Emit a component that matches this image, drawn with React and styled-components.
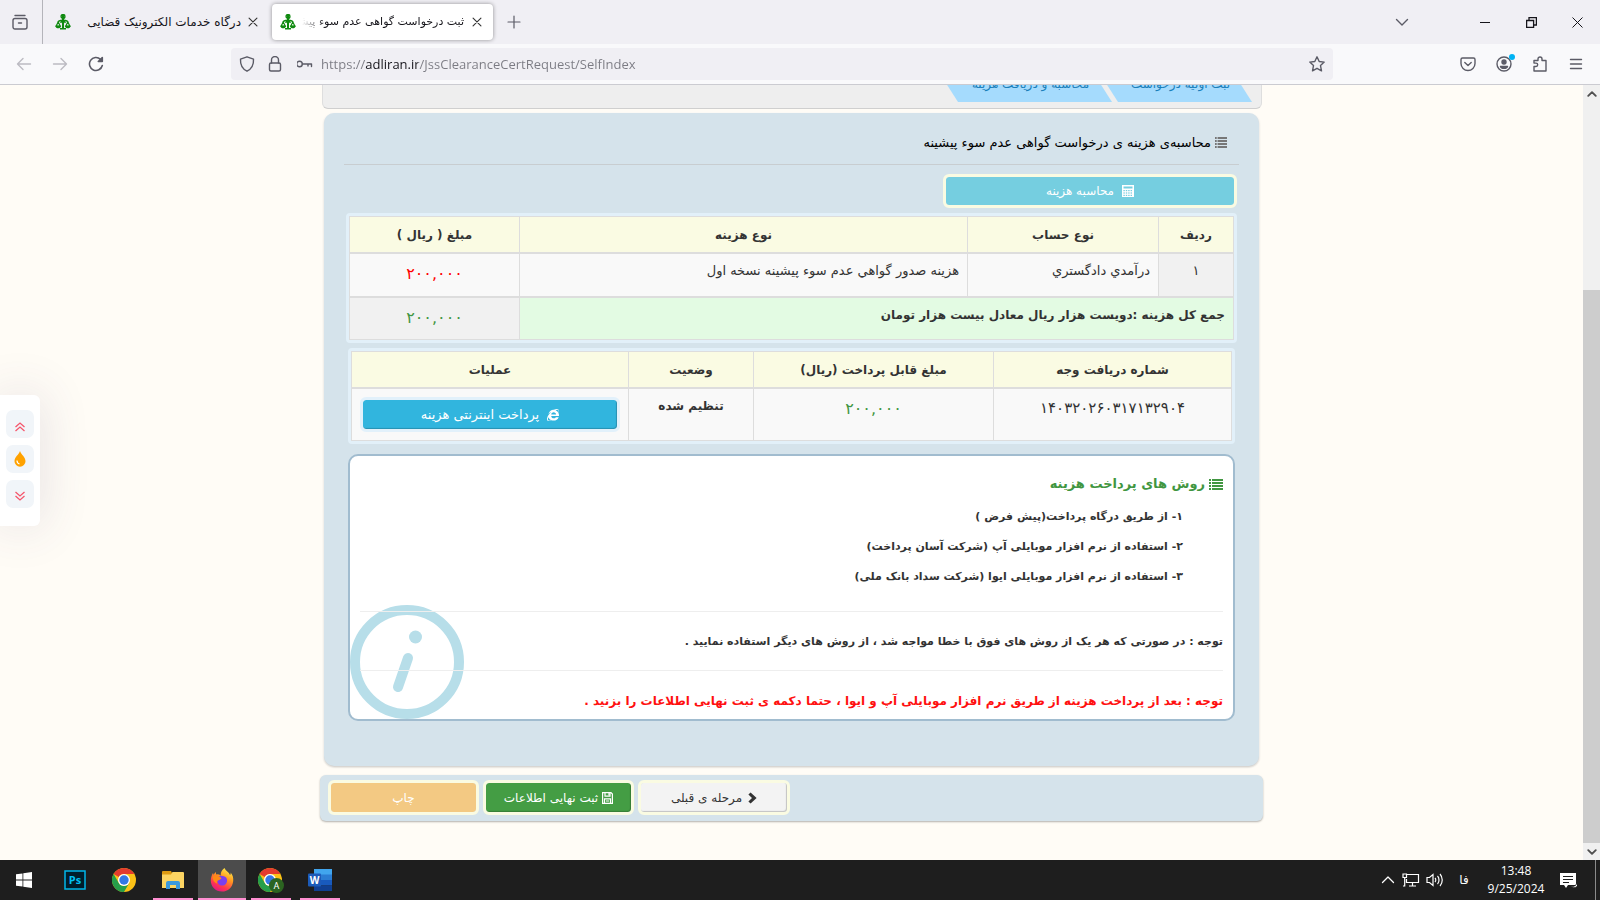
import React from 'react';
import styled, { createGlobalStyle } from 'styled-components';
import { FaInternetExplorer } from 'react-icons/fa';

const GlobalStyle = createGlobalStyle`
  * {
    box-sizing: border-box;
  }

  body {
    margin: 0;
    color: #333;
    font-family: 'DejaVu Sans', sans-serif;
    font-size: 12px;
  }

  button,
  input {
    font: inherit;
  }
`;

const Screen = styled.div`
  display: flex;
  flex-direction: column;
  height: 100vh;
  overflow: hidden;
`;

/* ---------- browser chrome ---------- */

const TabStrip = styled.div`
  display: flex;
  align-items: center;
  flex: none;
  height: 44px;
  background: #f0eff4;
`;

const IconButton = styled.button`
  display: flex;
  align-items: center;
  justify-content: center;
  flex: none;
  width: ${p => p.$width || 36}px;
  height: 32px;
  padding: 0;
  border: 0;
  background: none;
  color: ${p => p.$color || '#5b5b66'};
`;

const StripDivider = styled.div`
  width: 1px;
  height: 44px;
  margin-left: 2px;
  background: #b4b4ba;
`;

const Tab = styled.div`
  display: flex;
  align-items: center;
  width: 221px;
  height: 36px;
  margin-left: 4px;
  padding: 0 3px 0 8px;
  border-radius: 4px;
  background: ${p => (p.$active ? '#fff' : 'transparent')};
  box-shadow: ${p => (p.$active ? '0 0 4px rgba(0, 0, 0, 0.4)' : 'none')};
`;

const TabTitle = styled.span`
  flex: 1;
  min-width: 0;
  margin-left: 6px;
  overflow: hidden;
  color: #15141a;
  font-size: ${p => (p.$fade ? 11 : 12)}px;
  line-height: 24px;
  direction: rtl;
  white-space: nowrap;
  ${p => p.$fade && 'mask-image: linear-gradient(to right, transparent, #000 24px);'}
`;

const Spacer = styled.div`
  flex: 1;
  max-width: ${p => (p.$max ? `${p.$max}px` : 'none')};
`;

const NavBar = styled.div`
  display: flex;
  align-items: center;
  flex: none;
  height: 41px;
  padding: 0 6px;
  border-bottom: 1px solid #cbcbd1;
  background: #f9f9fb;
`;

const UrlBox = styled.div`
  display: flex;
  align-items: center;
  flex: 1;
  height: 32px;
  margin: 0 117px;
  padding-left: 2px;
  border-radius: 4px;
  background: #f0eff4;
`;

// the host name is darker than the rest of the address
const UrlInput = styled.input`
  flex: 1;
  min-width: 0;
  height: 24px;
  padding: 0;
  border: 0;
  outline: 0;
  font-family: 'Open Sans', sans-serif;
  font-size: 13px;
  background: linear-gradient(to right, #7b7b83 44px, #15141a 44px, #15141a 97px, #7b7b83 97px);
  background-clip: text;
  -webkit-text-fill-color: transparent;
`;

const BadgedIcon = styled.span`
  position: relative;
  display: flex;
`;

const Badge = styled.span`
  position: absolute;
  top: -2px;
  right: -3px;
  width: 6px;
  height: 6px;
  border-radius: 50%;
  background: #00b3f4;
`;

/* ---------- page ---------- */

const Viewport = styled.div`
  position: relative;
  display: flex;
  flex: 1;
  min-height: 0;
  background: #fffcf6;
`;

const Page = styled.main`
  flex: 1;
  overflow: hidden;
  direction: rtl;
`;

const Container = styled.div`
  max-width: 943px;
  margin: 0 auto;
`;

const Steps = styled.div`
  display: flex;
  align-items: flex-end;
  height: 24px;
  margin: 0 1px 0 2px;
  padding: 0 9px 6px;
  border: 1px solid #dedede;
  border-top: 0;
  border-bottom-color: #cfcfcf;
  border-radius: 0 0 6px 6px;
  background: #eee;
  overflow: hidden;
`;

const Step = styled.div`
  flex: none;
  width: ${p => p.$width}px;
  height: 36px;
  margin-left: -17px;
  padding-left: 14px;
  background: #a5dbfd;
  color: #1a7fba;
  font-size: 12px;
  line-height: 36px;
  text-align: center;
  clip-path: polygon(0 0, calc(100% - 23px) 0, 100% 100%, 23px 100%);
`;

const Panel = styled.section`
  margin: 4px 4px 0;
  padding: 0 20px 45px;
  border-radius: 10px;
  background: #d5e3eb;
  box-shadow: 0 0 0 1px rgba(255, 255, 255, 0.3), 0 1px 2px rgba(0, 0, 0, 0.3);
`;

const PanelTitle = styled.h2`
  display: flex;
  align-items: center;
  gap: 4px;
  height: 52px;
  margin: 0 0 9px;
  padding: 8px 12px 0 0;
  border-bottom: 1px solid #c8cdd0;
  color: #000;
  font-size: 13px;
  font-weight: normal;
`;

const Button = styled.button`
  display: flex;
  align-items: center;
  justify-content: center;
  gap: ${p => p.$gap || 4}px;
  width: ${p => p.$width};
  height: ${p => p.$height || 35}px;
  padding: 0;
  border: 3px solid ${p => p.$ring || '#fafbe2'};
  border-radius: 6px;
  background: ${p => p.$bg};
  background-clip: padding-box;
  box-shadow: ${p => (p.$raised ? 'inset -1px -1px 1px rgba(0, 0, 0, 0.2)' : 'none')};
  color: ${p => p.$color || '#fff'};
  font-size: 12px;
`;

const CalcButton = styled(Button)`
  margin: 0 2px 0 0;
`;

const PayButton = styled(Button)`
  margin-top: 2px;
  font-size: 13px;
`;

const TableFrame = styled.div`
  margin: 5px ${p => (p.$inset ? '4px 0 4px' : '2px 0 2px')};
  border: 3px solid #e2f0f9;
  border-radius: 4px;
`;

const Table = styled.table`
  width: 100%;
  table-layout: fixed;
  border-collapse: separate;
  border-spacing: 0;
  border-top: 1px solid #ddd;
  border-right: 1px solid #ddd;
`;

const Th = styled.th`
  width: ${p => (p.$width ? `${p.$width}px` : 'auto')};
  height: 37px;
  padding: 0;
  border-left: 1px solid #ddd;
  border-bottom: 2px solid #ddd;
  background: #fafbe3;
  font-size: 12px;
  font-weight: bold;
`;

const Td = styled.td`
  height: ${p => p.$height}px;
  padding: 6px 8px 0 8px;
  border-left: 1px solid #ddd;
  border-bottom: ${p => (p.$last ? 1 : 2)}px solid #ddd;
  background: ${p => p.$bg || '#f9f9f9'};
  font-size: ${p => (p.$bold ? 12 : 13)}px;
  font-weight: ${p => (p.$bold ? 'bold' : 'normal')};
  line-height: 22px;
  text-align: ${p => (p.$center ? 'center' : 'right')};
  vertical-align: top;
`;

const Amount = styled.span`
  color: ${p => p.$color};
  font-size: 16px;
  line-height: 28px;
`;

const ReceiptNumber = styled.span`
  font-size: 15px;
  line-height: 26px;
`;

const InfoBox = styled.section`
  position: relative;
  height: 267px;
  margin: 10px 4px 0;
  padding: 14px 10px 0;
  border: 2px solid #a1bccf;
  border-radius: 10px;
  background: #fff;
`;

const InfoMark = styled.svg`
  position: absolute;
  left: 0;
  bottom: 0;
`;

const InfoTitle = styled.h3`
  display: flex;
  align-items: center;
  gap: 4px;
  margin: 0 0 4px;
  color: #419641;
  font-size: 13px;
  line-height: 28px;
`;

const Methods = styled.ul`
  margin: 0;
  padding: 0 40px 0 0;
  list-style: none;
  font-size: 11px;
  font-weight: bold;
  line-height: 30px;
`;

const Rule = styled.hr`
  position: relative;
  margin: ${p => p.$top}px 0 0;
  border: 0;
  border-top: 1px solid #eee;
`;

const Notice = styled.p`
  position: relative;
  margin: 15px 0 0;
  color: ${p => (p.$alert ? '#ff1010' : '#333')};
  font-size: ${p => (p.$alert ? 12 : 11)}px;
  font-weight: bold;
  line-height: 30px;
`;

const Footer = styled.footer`
  display: flex;
  justify-content: flex-end;
  gap: 4px;
  height: 46px;
  margin-top: 9px;
  padding: 5px 8px;
  border-radius: 6px;
  background: #d5e3eb;
  box-shadow: 0 1px 2px rgba(0, 0, 0, 0.3);
`;

const SideTools = styled.div`
  position: absolute;
  top: 310px;
  left: 0;
  display: flex;
  flex-direction: column;
  gap: 7px;
  width: 40px;
  padding: 15px 6px 18px;
  border-radius: 0 6px 6px 0;
  background: #fff;
  box-shadow: 0 0 50px rgba(80, 60, 110, 0.16);
`;

const SideButton = styled.button`
  display: flex;
  align-items: center;
  justify-content: center;
  width: 28px;
  height: 28px;
  padding: ${p => p.$top || 0}px 0 0;
  border: 0;
  border-radius: 7px;
  background: #f1f5f9;
  color: #f5556b;
`;

const Scrollbar = styled.div`
  display: flex;
  flex-direction: column;
  flex: none;
  width: 17px;
  background: #f0f0f0;
`;

const ScrollButton = styled.button`
  display: flex;
  align-items: center;
  justify-content: center;
  height: 17px;
  padding: 0;
  border: 0;
  background: none;
  color: #505050;
`;

const ScrollTrack = styled.div`
  display: flex;
  flex: 1;
  flex-direction: column;
  justify-content: flex-end;
`;

const ScrollThumb = styled.div`
  height: calc(75% - 3px);
  background: #cdcdcd;
`;

/* ---------- taskbar ---------- */

const Taskbar = styled.div`
  display: flex;
  align-items: center;
  flex: none;
  height: 40px;
  background: #1e1e1e;
  color: #fff;
`;

const TaskButton = styled.button`
  display: flex;
  align-items: center;
  justify-content: center;
  width: ${p => p.$width || 48}px;
  height: 40px;
  margin-right: 1px;
  padding: 0;
  border: 0;
  background: ${p => (p.$active ? '#4c4c4c' : 'none')};
  box-shadow: ${p => (p.$active ? 'inset 0 -2px #ff8fd2' : 'none')};
`;

const Running = styled.span`
  display: flex;
  align-items: center;
  justify-content: center;
  width: 40px;
  height: 40px;
  box-shadow: inset 0 -2px #ff8fd2;
`;

const Tray = styled.div`
  display: flex;
  align-items: center;
  gap: 6px;
  height: 40px;
  font-family: 'Open Sans', 'DejaVu Sans', sans-serif;
  font-size: 12px;
`;

const Language = styled.span`
  width: 28px;
  font-family: 'DejaVu Sans', sans-serif;
  font-size: 12px;
  text-align: center;
`;

const Clock = styled.div`
  width: 64px;
  margin-right: 6px;
  line-height: 18px;
  text-align: center;
`;

const DesktopEdge = styled.div`
  width: 5px;
  height: 40px;
  margin-left: 12px;
  border-left: 1px solid #8a8a8a;
`;

/* ---------- drawings ---------- */

const Line = ({ size = 16, width = 1.4, children }) => (
  <svg
    width={size}
    height={size}
    viewBox="0 0 16 16"
    fill="none"
    stroke="currentColor"
    strokeWidth={width}
    strokeLinecap="round"
    strokeLinejoin="round"
  >
    {children}
  </svg>
);

const CloseIcon = () => (
  <Line size={14} width={1.3}>
    <path d="M3.5 3.5l9 9m0-9l-9 9" />
  </Line>
);

const Favicon = () => (
  <svg width="16" height="16" viewBox="0 0 16 16" fill="none" stroke="#108a10" strokeWidth="1.6">
    <circle cx="8" cy="2.4" r="1.9" strokeWidth="1.4" />
    <path d="M8 1v13" strokeWidth="2" />
    <path d="M5 14.8h6M3.2 8.5c0-2 1.6-2.3 4.8-2.3s4.8.3 4.8 2.300" />
    <path d="M5.5 8.800L8 6.300l2.500 2.500" strokeWidth="1.600" />
    <path d="M3.200 8L1.200 12h4zM12.800 8l-2 4h4z" strokeWidth="1.200" />
    <path d="M.2 11.800h6c-.5 3.400-5.500 3.400-6 0zM9.800 11.800h6c-.5 3.400-5.500 3.400-6 0z" fill="#108a10" stroke="none" />
  </svg>
);

const ListIcon = ({ width = 12, color = '#777' }) => (
  <svg width={width} height="11" viewBox="0 0 14 11" fill={color} preserveAspectRatio="none">
    {[0, 3, 6, 9].map(y => (
      <React.Fragment key={y}>
        <rect x="0" y={y} width="2" height="2" />
        <rect x="3" y={y} width="11" height="2" />
      </React.Fragment>
    ))}
  </svg>
);

const CalculatorIcon = () => (
  <svg width="12" height="12" viewBox="0 0 12 12" fill="#fff">
    <path d="M0 0h12v12H0zM1.5 1.500v2h9v-2z" fillRule="evenodd" />
    {[5, 7.4, 9.8].map(y =>
      [1.4, 3.8, 6.2, 8.6].map(x => (
        <rect key={`${x}-${y}`} x={x} y={y} width="1.4" height="1.2" fill="#75cee0" />
      ))
    )}
  </svg>
);

const SaveIcon = () => (
  <svg width="11" height="12" viewBox="0 0 11 12" fill="none" stroke="#fff" strokeWidth="1.2">
    <path d="M.6.600h8.400l1.400 1.400v9.400H.600z" />
    <path d="M3 .6v3.600h5V.600M2.500 11.400V6.800h6v4.600M4 9h3" />
    <path d="M6.400 1h1.300v2.500H6.400z" fill="#fff" stroke="none" />
  </svg>
);

const ChevronIcon = () => (
  <svg width="9" height="12" viewBox="0 0 9 12" fill="#333">
    <path d="M2.600.400L8.600 6l-6 5.600L.400 9.400 4 6 .400 2.600z" />
  </svg>
);

const DoubleChevron = ({ down }) => (
  <svg width="10" height="10" viewBox="0 0 10 10" fill="none" stroke="currentColor" strokeWidth="1.3">
    <path d={down ? 'M.5 1L5 5l4.500-4M.5 5L5 9l4.500-4' : 'M.5 5L5 1l4.500 4M.5 9L5 5l4.500 4'} />
  </svg>
);

const ChromeIcon = ({ profile }) => (
  <svg width="26" height="26" viewBox="0 0 26 26">
    <circle cx="12" cy="13" r="12" fill="#fbc116" />
    <path d="M1.600 7A12 12 0 0 1 22.400 7H12a6 6 0 0 0-5.200 3z" fill="#e33b2e" />
    <path d="M1.600 7A12 12 0 0 0 12 25l5.200-9A6 6 0 0 1 6.800 16z" fill="#269f4a" />
    <circle cx="12" cy="13" r="6" fill="#fff" />
    <circle cx="12" cy="13" r="4.700" fill="#3478e5" />
    {profile && (
      <>
        <circle cx="18.500" cy="18.500" r="7.500" fill="#2c6421" />
        <text x="18.500" y="21.800" fill="#fff" fontSize="9" fontFamily="Roboto" textAnchor="middle">
          A
        </text>
      </>
    )}
  </svg>
);

const FirefoxIcon = () => (
  <svg width="24" height="24" viewBox="0 0 24 24">
    <defs>
      <linearGradient id="fox" x1="0.8" y1="0" x2="0.3" y2="1">
        <stop offset="0" stopColor="#fff44f" />
        <stop offset="0.4" stopColor="#ff9a1f" />
        <stop offset="0.75" stopColor="#ff3750" />
        <stop offset="1" stopColor="#e31587" />
      </linearGradient>
    </defs>
    <path
      d="M14.500 0c1 3 4.500 4 5.500 7 .8-.5.800-1.500.6-2.500C22.800 7 23.500 10 23.200 13 22.600 19.500 17.800 23.600 12 23.600 5.500 23.600.8 18.500.8 12.500c0-3 1-5.500 2.200-7.500l.6 1.800C4.200 5.500 5 4.600 6 4v2.400c1.800-.3 3.500 0 4.700 1C10.500 4.500 12 1.500 14.500 0z"
      fill="url(#fox)"
    />
    <path
      d="M7 9.500c2-2 5-2 7.500-1 3 1.300 3.300 5 1.500 7.200-2.200 2.700-6.500 2.300-8-.5-1-1.800-.5-3 .5-3.700 1-.6 2.500-.5 3.200-1.500-1.500.3-3-.8-4.700-.5z"
      fill="#7a3ff0"
    />
    <path d="M2.500 8.500C5 7 8 7.500 10.500 9.300 12 10.400 10 12 8.500 12.200c-1.800.3-2 1.700-1 3.300C4.500 15 2.500 12 2.500 8.500z" fill="#ff8a16" />
  </svg>
);

const FolderIcon = () => (
  <svg width="22" height="18" viewBox="0 0 22 18">
    <path d="M0 1a1 1 0 0 1 1-1h8l1 2v3H0z" fill="#dd9a12" />
    <path d="M0 3.500h9L10.500 1H21a1 1 0 0 1 1 1v15H0z" fill="#fcd462" />
    <path d="M4 18v-6a2 2 0 0 1 2-2h10a2 2 0 0 1 2 2v6h-4v-4H8v4z" fill="#3b99dd" />
  </svg>
);

const PhotoshopIcon = () => (
  <svg width="22" height="20" viewBox="0 0 22 20">
    <rect x="1" y="1" width="20" height="18" fill="#001d2b" stroke="#00b7ea" strokeWidth="1.5" />
    <text x="11" y="14" fill="#00c0f5" fontSize="11" fontWeight="bold" fontFamily="Open Sans" textAnchor="middle">
      Ps
    </text>
  </svg>
);

const WordIcon = () => (
  <svg width="24" height="22" viewBox="0 0 24 22">
    <rect x="6" width="18" height="6" fill="#41a5ee" />
    <rect x="6" y="5.5" width="18" height="5.5" fill="#2b7cd3" />
    <rect x="6" y="11" width="18" height="5.5" fill="#185abd" />
    <rect x="6" y="16.5" width="18" height="5.5" fill="#103f91" />
    <rect y="4.5" width="13" height="13" rx="1" fill="#1c5bb9" />
    <text x="6.5" y="14.8" fill="#fff" fontSize="10" fontWeight="bold" fontFamily="Open Sans" textAnchor="middle">
      W
    </text>
  </svg>
);

const WindowsIcon = () => (
  <svg width="16" height="16" viewBox="0 0 16 16" fill="#fff">
    <path d="M0 2.300l6.500-.9v6.200H0zM7.300 1.300L16 0v7.600H7.300zM0 8.400h6.500v6.200L0 13.700zM7.300 8.400H16V16l-8.700-1.300z" />
  </svg>
);

const InfoDrawing = () => (
  <InfoMark width="115" height="115" viewBox="0 0 115 115" fill="none" stroke="#b7dee9">
    <circle cx="57" cy="58" r="52" strokeWidth="10" />
    <circle cx="65.5" cy="33" r="6.5" fill="#b7dee9" stroke="none" />
    <path d="M58 54L48 83" strokeWidth="10" strokeLinecap="round" />
  </InfoMark>
);

/* ---------- sections ---------- */

const BrowserTabs = () => (
  <TabStrip>
    <IconButton $width={40} aria-label="Recent browsing">
      <Line>
        <rect x="1" y="4.5" width="14" height="10.5" rx="2" />
        <path d="M3 1.500h10M6.500 9h3" />
      </Line>
    </IconButton>
    <StripDivider />
    <Tab>
      <Favicon />
      <TabTitle>درگاه خدمات الکترونیک قضایی</TabTitle>
      <IconButton $width={24} $color="#333" aria-label="Close tab">
        <CloseIcon />
      </IconButton>
    </Tab>
    <Tab $active>
      <Favicon />
      <TabTitle $fade>ثبت درخواست گواهی عدم سوء پیشینه</TabTitle>
      <IconButton $width={26} $color="#333" aria-label="Close tab">
        <CloseIcon />
      </IconButton>
    </Tab>
    <IconButton $width={42} aria-label="New tab">
      <Line width={1.2}>
        <path d="M8 2v12M2 8h12" />
      </Line>
    </IconButton>
    <Spacer />
    <IconButton $width={46} aria-label="List tabs">
      <Line>
        <path d="M2.500 5.500L8 11l5.500-5.500" />
      </Line>
    </IconButton>
    <Spacer $max={37} />
    <IconButton $width={46} aria-label="Minimize">
      <svg width="10" height="1">
        <rect width="10" height="1" fill="#15141a" />
      </svg>
    </IconButton>
    <IconButton $width={46} aria-label="Restore">
      <svg width="11" height="11" fill="none" stroke="#15141a" strokeWidth="1.3">
        <path d="M.6 3.500h7v7h-7zM3 3.500V.6h7.400V8H7.600" />
      </svg>
    </IconButton>
    <IconButton $width={46} aria-label="Close">
      <svg width="11" height="11" stroke="#15141a" strokeWidth="1">
        <path d="M.5.5l10 10m0-10l-10 10" />
      </svg>
    </IconButton>
  </TabStrip>
);

const BrowserNav = () => (
  <NavBar>
    <IconButton $color="#bcbbc2" aria-label="Back">
      <Line><path d="M14.500 8h-13M7 2.500L1.500 8 7 13.500" /></Line>
    </IconButton>
    <IconButton $color="#bcbbc2" aria-label="Forward">
      <Line><path d="M1.500 8h13M9 2.500L14.500 8 9 13.500" /></Line>
    </IconButton>
    <IconButton aria-label="Reload">
      <Line width={1.6}>
        <path d="M14.300 9.500A6.500 6.500 0 1 1 12.500 3.300L14 4.800" />
        <path d="M14.300 1.500v4h-4z" fill="currentColor" />
      </Line>
    </IconButton>
    <UrlBox>
      <IconButton $width={28} aria-label="Protection">
        <Line><path d="M8 .8l6.500 2.300c.3 5-1.500 9.600-6.500 12.100C3 12.700 1.200 8.100 1.500 3.100z" /></Line>
      </IconButton>
      <IconButton $width={28} aria-label="Site security">
        <Line>
          <rect x="2.5" y="7" width="11" height="8" rx="1.5" />
          <path d="M4.500 7V4a3.500 3.500 0 0 1 7 0v3" />
        </Line>
      </IconButton>
      <IconButton $width={32} aria-label="Saved password">
        <Line>
          <circle cx="2.5" cy="8" r="2.8" />
          <path d="M5.500 8h9v2.500M11 8v2" />
        </Line>
      </IconButton>
      <UrlInput
        aria-label="Address"
        defaultValue="https://adliran.ir/JssClearanceCertRequest/SelfIndex"
      />
      <IconButton $width={32} aria-label="Bookmark">
        <Line>
          <path d="M8 .8l2.200 4.700 5 .6-3.700 3.500 1 5.200L8 12.300l-4.500 2.500 1-5.200L.8 6.100l5-.6z" />
        </Line>
      </IconButton>
    </UrlBox>
    <IconButton aria-label="Pocket">
      <Line>
        <path d="M2.500 2h11a1.500 1.500 0 0 1 1.500 1.500V7.500a7 7 0 0 1-14 0V3.500A1.500 1.500 0 0 1 2.500 2zM4.800 6.500L8 9.500l3.200-3" />
      </Line>
    </IconButton>
    <IconButton aria-label="Account">
      <BadgedIcon>
        <Line>
          <circle cx="8" cy="8" r="7" />
          <circle cx="8" cy="6" r="2" fill="currentColor" />
          <path d="M4.500 10.500h7c-.8 2.500-6.200 2.500-7 0z" fill="currentColor" />
        </Line>
        <Badge />
      </BadgedIcon>
    </IconButton>
    <IconButton aria-label="Extensions">
      <Line>
        <path d="M2 15V10.500h2a1.700 1.700 0 0 0 0-3.400H2V4.500h4V3a2 2 0 0 1 4 0v1.500h4V15z" />
      </Line>
    </IconButton>
    <IconButton aria-label="Menu">
      <Line><path d="M2.500 3.500h11M2.500 8h11M2.500 12.500h11" /></Line>
    </IconButton>
  </NavBar>
);

const CostTable = () => (
  <TableFrame>
    <Table>
      <thead>
        <tr>
          <Th $width={75}>ردیف</Th>
          <Th $width={191}>نوع حساب</Th>
          <Th>نوع هزینه</Th>
          <Th $width={170}>مبلغ ( ریال )</Th>
        </tr>
      </thead>
      <tbody>
        <tr>
          <Td $height={44} $center $bg="#f1f1f1">۱</Td>
          <Td $height={44}>درآمدي دادگستري</Td>
          <Td $height={44}>هزينه صدور گواهي عدم سوء پيشينه نسخه اول</Td>
          <Td $height={44} $center><Amount $color="#f00">۲۰۰,۰۰۰</Amount></Td>
        </tr>
        <tr>
          <Td $height={42} $last $bold $bg="#e3fbe3" colSpan={3}>
            جمع کل هزینه :دویست هزار ریال معادل بیست هزار تومان
          </Td>
          <Td $height={42} $last $center $bg="#f1f1f1"><Amount $color="#419641">۲۰۰,۰۰۰</Amount></Td>
        </tr>
      </tbody>
    </Table>
  </TableFrame>
);

const PaymentTable = () => (
  <TableFrame $inset>
    <Table>
      <thead>
        <tr>
          <Th $width={238}>شماره دریافت وجه</Th>
          <Th $width={240}>مبلغ قابل پرداخت (ریال)</Th>
          <Th $width={125}>وضعیت</Th>
          <Th>عملیات</Th>
        </tr>
      </thead>
      <tbody>
        <tr>
          <Td $height={52} $last $center><ReceiptNumber>۱۴۰۳۲۰۲۶۰۳۱۷۱۳۲۹۰۴</ReceiptNumber></Td>
          <Td $height={52} $last $center><Amount $color="#419641">۲۰۰,۰۰۰</Amount></Td>
          <Td $height={52} $last $center $bold>تنظیم شده</Td>
          <Td $height={52} $last>
            <PayButton $width="100%" $bg="#31b5de" $ring="#e2f1fb" $gap={8} $raised>
              <FaInternetExplorer size={12} />
              پرداخت اینترنتی هزینه
            </PayButton>
          </Td>
        </tr>
      </tbody>
    </Table>
  </TableFrame>
);

const PaymentInfo = () => (
  <InfoBox>
    <InfoDrawing />
    <InfoTitle>
      <ListIcon width={14} color="#419641" />
      روش های پرداخت هزینه
    </InfoTitle>
    <Methods>
      <li>۱- از طریق درگاه پرداخت(پیش فرض )</li>
      <li>۲- استفاده از نرم افزار موبایلی آپ (شرکت آسان پرداخت)</li>
      <li>۳- استفاده از نرم افزار موبایلی ایوا (شرکت سداد بانک ملی)</li>
    </Methods>
    <Rule $top={19} />
    <Notice>توجه : در صورتی که هر یک از روش های فوق با خطا مواجه شد ، از روش های دیگر استفاده نمایید .</Notice>
    <Rule $top={13} />
    <Notice $alert>
      توجه : بعد از پرداخت هزینه از طریق نرم افزار موبایلی آپ و ایوا ، حتما دکمه ی ثبت نهایی اطلاعات را بزنید .
    </Notice>
  </InfoBox>
);

const WindowsTaskbar = () => (
  <Taskbar>
    <TaskButton aria-label="Start"><WindowsIcon /></TaskButton>
    <TaskButton $width={52} aria-label="Photoshop"><PhotoshopIcon /></TaskButton>
    <TaskButton $width={46} aria-label="Chrome"><ChromeIcon /></TaskButton>
    <TaskButton aria-label="Files"><Running><FolderIcon /></Running></TaskButton>
    <TaskButton $active aria-label="Firefox"><FirefoxIcon /></TaskButton>
    <TaskButton aria-label="Chrome profile"><Running><ChromeIcon profile /></Running></TaskButton>
    <TaskButton aria-label="Word"><Running><WordIcon /></Running></TaskButton>
    <Spacer />
    <Tray>
      <Line width={1.3}><path d="M2.500 10.500L8 5l5.500 5.500" /></Line>
      <svg width="18" height="14" viewBox="0 0 18 14" fill="none" stroke="#fff" strokeWidth="1.2">
        <path d="M5 1.500h11.500v8H4.500V6M10.500 9.500v3.500M7 13h7M1 1h3.500v3.500H1zM2.700 4.500V13H1" />
      </svg>
      <svg width="18" height="14" viewBox="0 0 18 14" fill="none" stroke="#fff" strokeWidth="1.2">
        <path d="M1 4.500h2.500L7 1.500v11L3.500 9.500H1zM9 5c1 1 1 3 0 4M11.500 3c2 2 2 6 0 8M14 1c3 3.500 3 8.500 0 12" />
      </svg>
      <Language>فا</Language>
      <Clock>
        <div>13:48</div>
        <div>9/25/2024</div>
      </Clock>
      <svg width="17" height="17" viewBox="0 0 17 17">
        <path d="M0 1h16v12H8l-2 3-2-3H0z" fill="#fff" />
        <path d="M3 4.500h10M3 7.500h10M3 10.500h6" stroke="#1e1e1e" />
        <path d="M16.500 8.500a4 4 0 1 1-6 5 4 4 0 0 0 6-5z" fill="#fff" stroke="#1e1e1e" strokeWidth=".8" />
      </svg>
      <DesktopEdge />
    </Tray>
  </Taskbar>
);

const App = () => (
  <Screen>
    <GlobalStyle />
    <BrowserTabs />
    <BrowserNav />
    <Viewport>
      <Page>
        <Container>
          <Steps>
            <Step $width={157}>ثبت اولیه درخواست</Step>
            <Step $width={177}>محاسبه و دریافت هزینه</Step>
          </Steps>
          <Panel>
            <PanelTitle>
              <ListIcon />
              محاسبه‌ی هزینه ی درخواست گواهی عدم سوء پیشینه
            </PanelTitle>
            <CalcButton $width="294px" $height={34} $bg="#75cee0" $gap={8}>
              <CalculatorIcon />
              محاسبه هزینه
            </CalcButton>
            <CostTable />
            <PaymentTable />
            <PaymentInfo />
          </Panel>
          <Footer>
            <Button $width="152px" $bg="#f3f3f3" $color="#333" $raised $gap={6}>
              <ChevronIcon />
              مرحله ی قبلی
            </Button>
            <Button $width="151px" $bg="#449d44" $raised>
              <SaveIcon />
              ثبت نهایی اطلاعات
            </Button>
            <Button $width="151px" $bg="#f3c983">چاپ</Button>
          </Footer>
        </Container>
      </Page>
      <Scrollbar>
        <ScrollButton aria-label="Scroll up">
          <Line size={10} width={3}><path d="M2 11l6-6 6 6" /></Line>
        </ScrollButton>
        <ScrollTrack><ScrollThumb /></ScrollTrack>
        <ScrollButton aria-label="Scroll down">
          <Line size={10} width={3}><path d="M2 5l6 6 6-6" /></Line>
        </ScrollButton>
      </Scrollbar>
      <SideTools>
        <SideButton $top={6} aria-label="Top"><DoubleChevron /></SideButton>
        <SideButton aria-label="Theme color">
          <svg width="12" height="16" viewBox="0 0 12 16">
            <path d="M6 0c1 3.500 5.500 6 5.500 10.200a5.500 5.500 0 0 1-11 0C.5 6 5 3.500 6 0z" fill="#ffa200" />
            <path d="M3 9.500c0 2 .8 3 2.500 3.500" fill="none" stroke="#fff" strokeWidth="1.2" />
          </svg>
        </SideButton>
        <SideButton $top={4} aria-label="Bottom"><DoubleChevron down /></SideButton>
      </SideTools>
    </Viewport>
    <WindowsTaskbar />
  </Screen>
);

export default App;
